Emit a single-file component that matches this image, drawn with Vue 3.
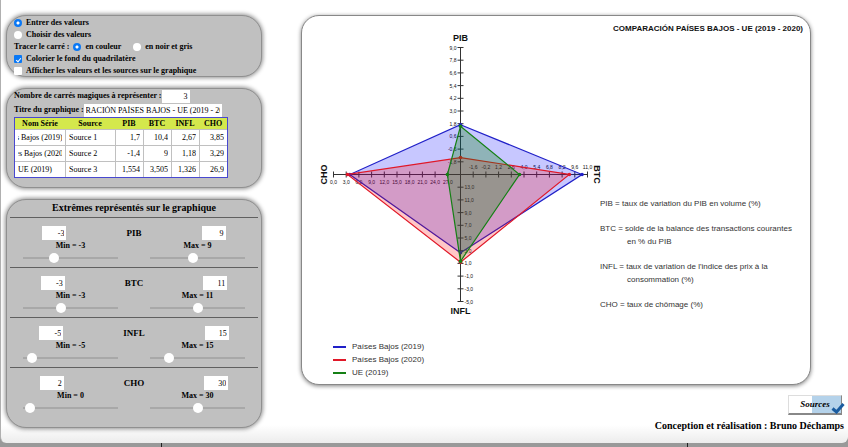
<script setup>
import { ref, reactive, onMounted } from 'vue'

const mode = ref('enter')
const palette = ref('color')
const fillShape = ref(true)
const showValues = ref(false)
const count = ref('3')
const title = ref('COMPARACIÓN PAÍSES BAJOS - UE (2019 - 2020)')

const series = reactive([
  { name: 'Países Bajos (2019)', source: 'Source 1', values: ['1,7', '10,4', '2,67', '3,85'], color: '#2020c8', fill: '#0000ff', opacity: 0.22, scroll: 19 },
  { name: 'Países Bajos (2020)', source: 'Source 2', values: ['-1,4', '9', '1,18', '3,29'], color: '#e01828', fill: '#ff0000', opacity: 0.22, scroll: 16 },
  { name: 'UE (2019)', source: 'Source 3', values: ['1,554', '3,505', '1,326', '26,9'], color: '#158015', fill: '#008000', opacity: 0.28, scroll: 0 },
])

const extremes = reactive([
  { name: 'PIB', min: '-3', max: '9', minLabel: '-3', minPos: 30, maxPos: 45 },
  { name: 'BTC', min: '-3', max: '11', minLabel: '-3', minPos: 39, maxPos: 51 },
  { name: 'INFL', min: '-5', max: '15', minLabel: '-5', minPos: 5, maxPos: 16 },
  { name: 'CHO', min: '2', max: '30', minLabel: '0', minPos: 2, maxPos: 50 },
])

const notes = [
  ['PIB = taux de variation du PIB en volume (%)'],
  ['BTC = solde de la balance des transactions courantes', 'en % du PIB'],
  ["INFL = taux de variation de l'indice des prix à la", 'consommation (%)'],
  ['CHO = taux de chômage (%)'],
]

const L = 127
// Value at the centre and value at the tip of each axis.
const axes = [
  { from: -3, to: 9, dx: 0, dy: -1 },
  { from: -3, to: 11, dx: 1, dy: 0 },
  { from: 15, to: -5, dx: 0, dy: 1 },
  { from: 30, to: 0, dx: -1, dy: 0 },
]
const num = (s) => parseFloat(s.replace(',', '.'))
const vertices = (s) =>
  axes.map((a, i) => {
    const r = (L * (num(s.values[i]) - a.from)) / (a.to - a.from)
    return [a.dx * r, a.dy * r]
  })
const points = (s) => vertices(s).map((p) => p.join(',')).join(' ')

const ticks = axes.flatMap((a, i) =>
  Array.from({ length: 10 }, (_, k) => {
    const t = (k + 1) / 10
    const x = a.dx * L * t
    const y = a.dy * L * t
    return {
      x, y,
      vertical: a.dx === 0,
      label: (a.from + (a.to - a.from) * t).toFixed(1).replace('.', ','),
      tx: [-4, x, 4, x][i],
      ty: [y + 2, -6, y + 2, 9][i],
      anchor: ['end', 'middle', 'start', 'middle'][i],
    }
  })
)

const titleBox = ref(null)
const nameBoxes = ref([])
onMounted(() => {
  titleBox.value.scrollLeft = 28
  nameBoxes.value.forEach((el, i) => { el.scrollLeft = series[i].scroll })
})
</script>

<template>
  <div class="page">
    <main class="window">
      <div class="columns">
        <div class="side">
          <section class="panel options">
            <label class="opt"><input v-model="mode" type="radio" name="mode" value="enter">Entrer des valeurs</label>
            <label class="opt"><input v-model="mode" type="radio" name="mode" value="choose">Choisir des valeurs</label>
            <div class="opt-row">
              <span>Tracer le carré :</span>
              <label class="opt"><input v-model="palette" type="radio" name="palette" value="color">en couleur</label>
              <label class="opt grey"><input v-model="palette" type="radio" name="palette" value="grey">en noir et gris</label>
            </div>
            <label class="opt"><input v-model="fillShape" type="checkbox">Colorier le fond du quadrilatère</label>
            <label class="opt"><input v-model="showValues" type="checkbox">Afficher les valeurs et les sources sur le graphique</label>
          </section>

          <section class="panel data">
            <div class="field">
              <label for="count">Nombre de carrés magiques à représenter :</label>
              <input id="count" v-model="count" class="box count" type="text">
            </div>
            <div class="field">
              <label for="title">Titre du graphique :</label>
              <input id="title" ref="titleBox" v-model="title" class="box title-box" type="text">
            </div>
            <table>
              <thead>
                <tr><th class="w-name">Nom Série</th><th class="w-name">Source</th><th>PIB</th><th>BTC</th><th>INFL</th><th>CHO</th></tr>
              </thead>
              <tbody>
                <tr v-for="s in series" :key="s.source">
                  <td><input ref="nameBoxes" v-model="s.name" type="text" aria-label="Nom Série"></td>
                  <td><input v-model="s.source" type="text" aria-label="Source"></td>
                  <td v-for="(v, i) in s.values" :key="i"><input v-model="s.values[i]" class="num" type="text" :aria-label="extremes[i].name"></td>
                </tr>
              </tbody>
            </table>
          </section>

          <section class="panel extremes">
            <h2>Extrêmes représentés sur le graphique</h2>
            <div v-for="e in extremes" :key="e.name" class="extreme">
              <div class="bounds">
                <input v-model="e.min" class="box bound" type="text" :aria-label="e.name + ' min'">
                <strong>{{ e.name }}</strong>
                <input v-model="e.max" class="box bound" type="text" :aria-label="e.name + ' max'">
              </div>
              <div class="sliders">
                <label>Min = {{ e.minLabel }}<input v-model="e.minPos" type="range" min="0" max="100"></label>
                <label>Max = {{ e.max }}<input v-model="e.maxPos" type="range" min="0" max="100"></label>
              </div>
            </div>
          </section>
        </div>

        <div class="result">
          <section class="card">
            <div class="plot">
              <svg class="chart" viewBox="-147.5 -144.5 287 290" role="img" aria-label="Carré magique">
                <g class="axis">
                  <path d="M0 -127V127M-127 0H127" />
                  <path v-for="(t, i) in ticks" :key="i" :d="t.vertical ? `M-3 ${t.y}h6` : `M${t.x} -3v6`" />
                </g>
                <g class="tick-text">
                  <text v-for="(t, i) in ticks" :key="i" :x="t.tx" :y="t.ty" :text-anchor="t.anchor">{{ t.label }}</text>
                </g>
                <g v-for="s in series" :key="s.source">
                  <polygon :points="points(s)" :fill="s.fill" :fill-opacity="fillShape ? s.opacity : 0" :stroke="s.color" />
                  <circle v-for="(p, i) in vertices(s)" :key="i" :cx="p[0]" :cy="p[1]" r="1.8" :fill="s.color" />
                </g>
                <g class="axis-name">
                  <text x="0" y="-134">PIB</text>
                  <text x="0" y="139">INFL</text>
                  <text transform="translate(-134 0) rotate(-90)">CHO</text>
                  <text transform="translate(133 0) rotate(90)">BTC</text>
                </g>
              </svg>
              <ul class="legend">
                <li v-for="s in series" :key="s.source">
                  <i class="swatch" :style="{ background: s.color }"></i>{{ s.name }}
                </li>
              </ul>
            </div>
            <div class="notes">
              <h1>{{ title }}</h1>
              <p v-for="(n, i) in notes" :key="i"><span v-for="line in n" :key="line">{{ line }}</span></p>
            </div>
          </section>
          <footer class="credits">
            <button type="button" class="sources">
              Sources
              <svg class="tick" viewBox="0 0 14 12" aria-hidden="true"><path d="M1.5 6.5 5.5 10 12.5 2" /></svg>
            </button>
            <p>Conception et réalisation : Bruno Déchamps</p>
          </footer>
        </div>
      </div>
    </main>
    <div class="strip"><span></span><span></span><span></span></div>
  </div>
</template>

<style>
body {
  margin: 0;
  background: #999;
}
</style>

<style scoped>
.page {
  font: bold 8px/12px "Liberation Serif", serif;
  color: #000;
}
.window {
  padding: 15px 4px 10px 5px;
  border-left: 1px solid #b0b0b0;
  border-radius: 0 0 6px 6px;
  background: linear-gradient(to top, #ececec, #fff 18px);
}
.columns {
  display: flex;
  gap: 39px;
}
.side {
  flex: none;
  width: 256px;
  display: flex;
  flex-direction: column;
  gap: 11px;
  padding-bottom: 5px;
}
.panel {
  box-sizing: border-box;
  border: 1px solid #909090;
  border-radius: 20px;
  background: #c0c0c0;
  box-shadow: 0 0 4px 1px #909090;
}
input {
  margin: 0;
  box-sizing: border-box;
  border: 0;
  font: 8px/12px "Liberation Serif", serif;
  color: #000;
}
.options {
  padding: 1px 7px 0;
  height: 62px;
}
.opt {
  display: flex;
  align-items: center;
  gap: 4px;
  height: 12px;
}
.opt-row {
  display: flex;
  align-items: center;
  gap: 4px;
}
.opt-row .grey {
  margin-left: 8px;
}
.opt input {
  appearance: none;
  width: 8px;
  height: 8px;
  background: #fff;
}
.opt input[type="radio"] {
  border-radius: 50%;
}
.opt input[type="radio"]:checked {
  background: radial-gradient(circle, #fff 0 1px, #0a78f5 2px);
}
.opt input[type="checkbox"] {
  border-radius: 1px;
}
.opt input[type="checkbox"]:checked {
  display: grid;
  place-items: center;
  background: #0a78f5;
}
.opt input[type="checkbox"]:checked::before {
  content: "";
  width: 2px;
  height: 4px;
  border: solid #fff;
  border-width: 0 1px 1px 0;
  transform: rotate(40deg);
}
.data {
  height: 100px;
  padding: 0 7px;
}
.field {
  display: flex;
  align-items: center;
  height: 14px;
}
.box {
  background: #fff;
  height: 13px;
  padding: 0 2px;
}
.count {
  width: 28px;
  text-align: right;
}
.title-box {
  width: 138px;
}
table {
  width: 214px;
  table-layout: fixed;
  border: 1px solid #4848d0;
  border-collapse: separate;
  border-spacing: 0;
}
th {
  height: 11px;
  padding: 0;
  background: #d4e84c;
  line-height: 11px;
}
.w-name {
  width: 50px;
}
td {
  height: 15px;
  padding: 0;
  background: #fff;
  border-top: 1px solid #c0c0c0;
  border-left: 1px solid #c0c0c0;
}
td:first-child {
  border-left: 0;
}
td input {
  display: block;
  width: 100%;
  padding: 0 3px;
  background: none;
}
.num {
  text-align: right;
}
.extremes {
  padding: 0 3px 10px;
}
h2 {
  margin: 0;
  padding-bottom: 2px;
  font-size: 10px;
  line-height: 15px;
  text-align: center;
}
.extreme {
  border-top: 1px solid #606060;
  height: 41px;
  padding-top: 8px;
}
.bounds {
  display: flex;
  justify-content: center;
  align-items: center;
  gap: 60px;
  height: 14px;
}
.bounds strong {
  font-size: 9px;
}
.bound {
  width: 24px;
  height: 14px;
  text-align: right;
}
.sliders {
  display: flex;
  justify-content: center;
  gap: 32px;
}
.sliders label {
  display: flex;
  flex-direction: column;
  align-items: center;
}
input[type="range"] {
  appearance: none;
  width: 95px;
  height: 12px;
  background: linear-gradient(#a8a8a8, #a8a8a8) center / 100% 2px no-repeat;
}
input[type="range"]::-webkit-slider-thumb {
  appearance: none;
  width: 10px;
  height: 10px;
  border-radius: 50%;
  background: #fff;
}
.result {
  flex: 1;
  min-width: 0;
}
.card {
  display: flex;
  margin-right: 33px;
  padding: 14px 0 5px 11px;
  border: 1px solid #888;
  border-radius: 18px;
  background: #fff;
  box-shadow: 0 1px 4px #808080;
  font: 8px/13px "Liberation Sans", sans-serif;
  color: #333;
}
.chart {
  display: block;
  width: 287px;
  height: 290px;
  overflow: visible;
}
.axis path {
  fill: none;
  stroke: #333;
  stroke-width: 1;
}
.tick-text {
  font-size: 5px;
  fill: #111;
}
.axis-name {
  font-size: 9px;
  font-weight: bold;
  fill: #111;
  text-anchor: middle;
}
polygon {
  stroke-width: 1.2;
}
.legend {
  margin: 0;
  padding: 20px 0 0 20px;
  list-style: none;
}
.legend li {
  display: flex;
  align-items: center;
  gap: 6px;
}
.swatch {
  width: 13px;
  height: 2px;
}
.notes {
  flex: 1;
  min-width: 0;
  white-space: nowrap;
}
h1 {
  margin: -8px 7px 162px 0;
  font-size: 8px;
  line-height: 13px;
  text-align: right;
  color: #111;
}
.notes p {
  margin: 0 0 12px;
}
.notes span {
  display: block;
}
.notes span + span {
  padding-left: 27px;
}
.credits {
  display: flex;
  flex-direction: column;
  align-items: flex-end;
  padding-top: 10px;
}
.sources {
  position: relative;
  width: 54px;
  height: 20px;
  margin-right: 2px;
  padding: 0 0 2px;
  border: 1px solid #ddd;
  border-right-color: #888;
  border-bottom: 2px solid #888;
  background: linear-gradient(to right, #fff 23px, #b4d2ea 23px);
  font: italic bold 9px/12px "Liberation Serif", serif;
  color: #000;
}
.tick {
  position: absolute;
  right: -4px;
  bottom: -1px;
  width: 14px;
  height: 12px;
  fill: none;
  stroke: #1a5ca0;
  stroke-width: 3;
}
.credits p {
  margin: 4px 0 0;
  font-size: 10px;
  line-height: 14px;
}
.strip {
  display: grid;
  grid-template-columns: 19% 62% 19%;
  height: 4px;
}
.strip span + span {
  border-left: 1px solid #222;
}
</style>
